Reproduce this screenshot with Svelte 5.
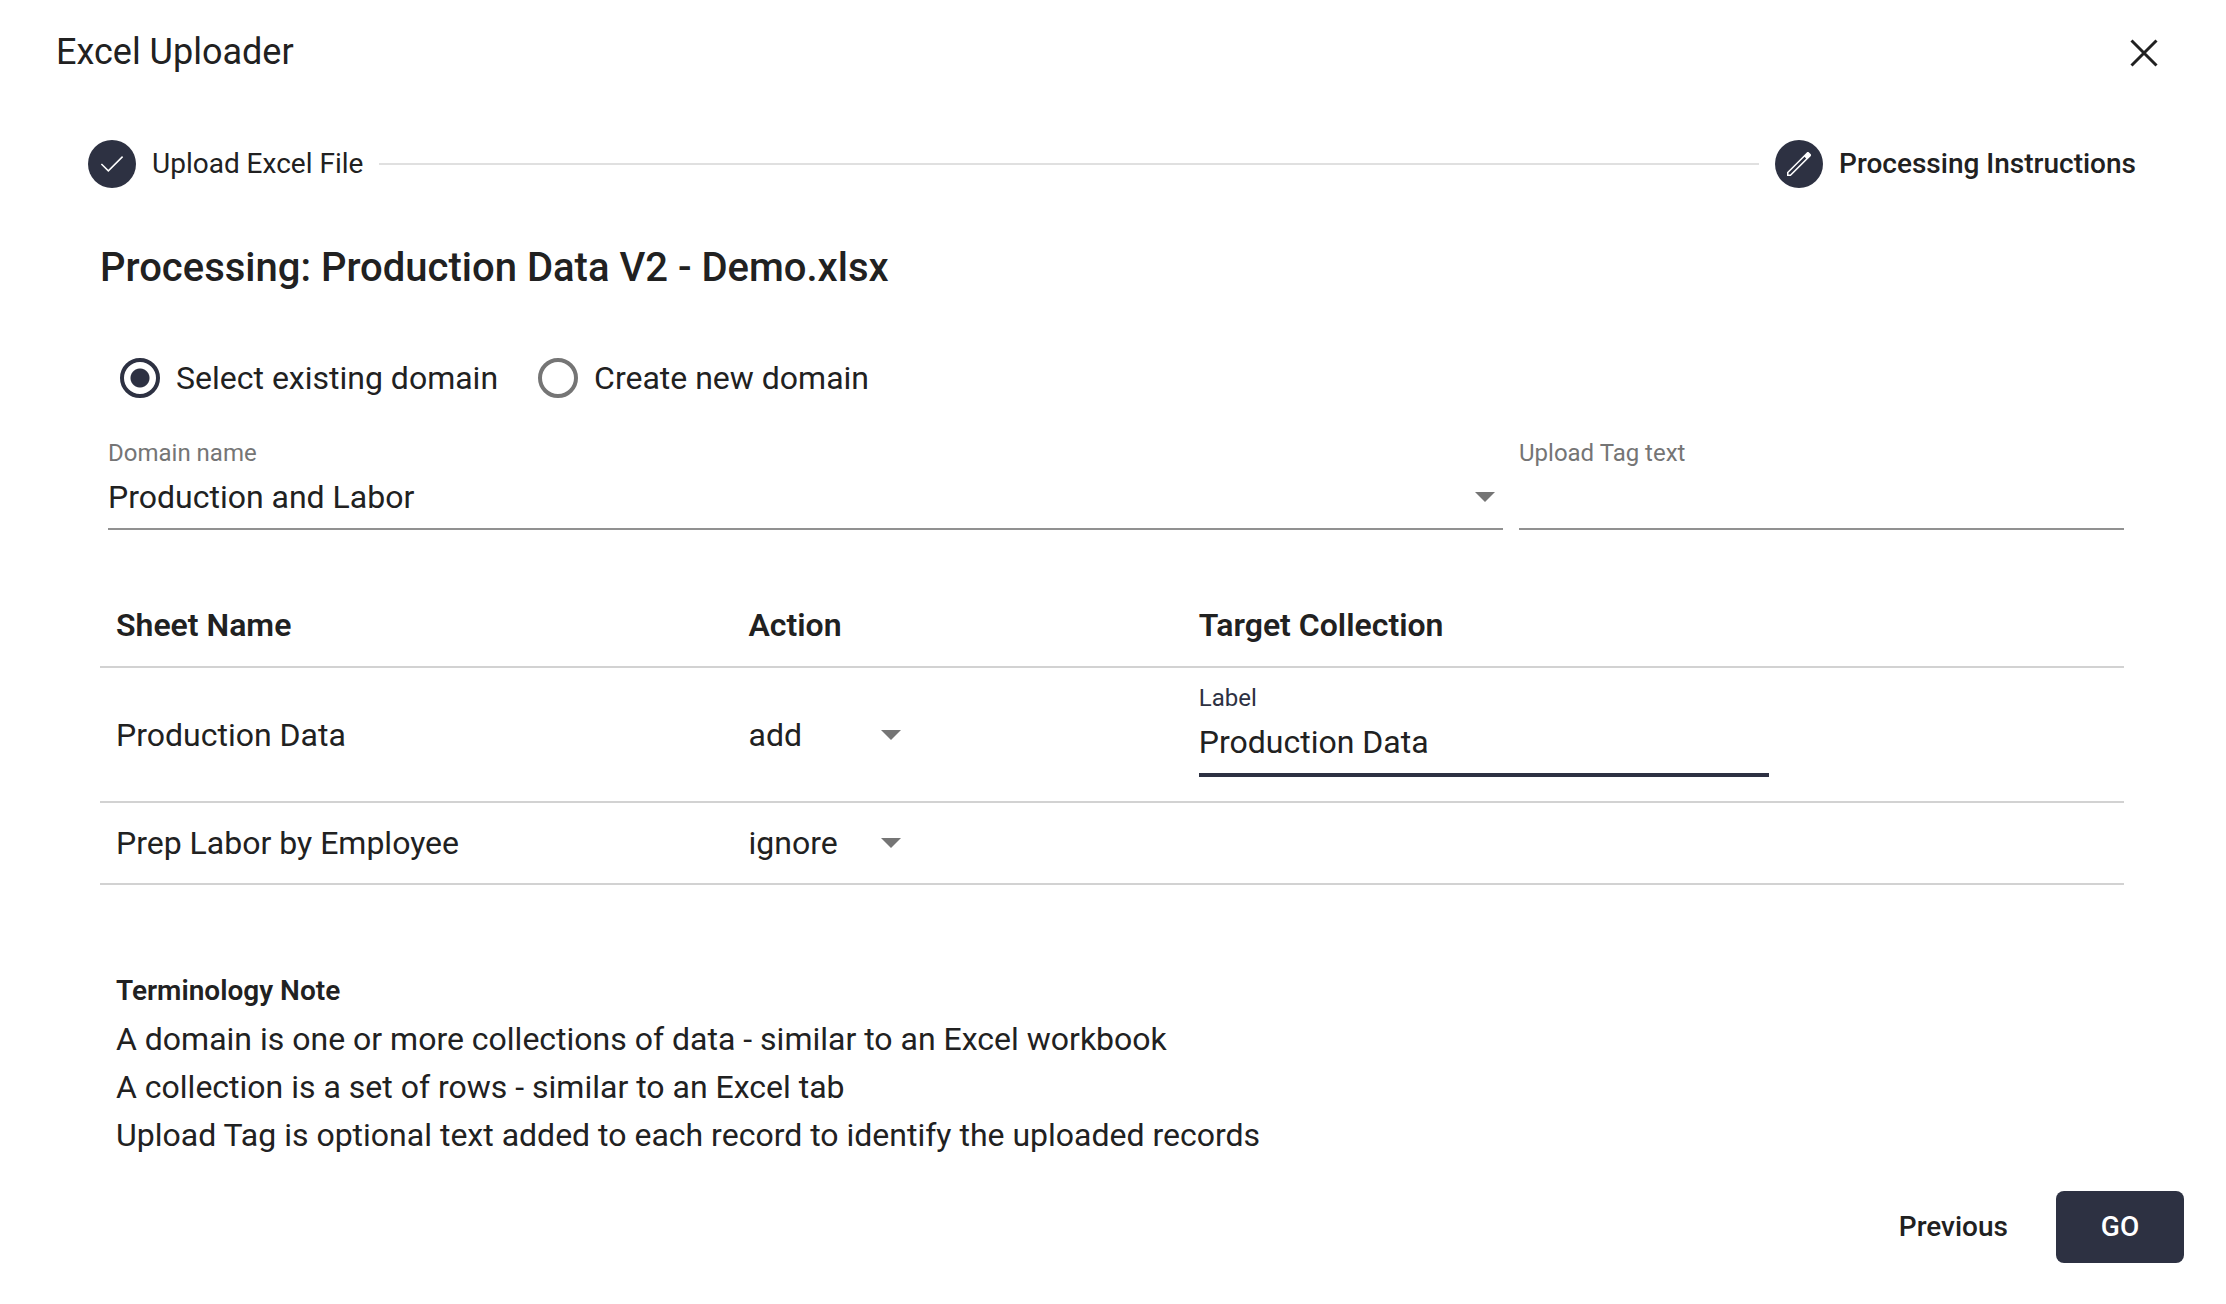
<script>
  let domainMode = $state('existing');
  let domain = $state('Production and Labor');
  let tag = $state('');
  let sheets = $state([
    { name: 'Production Data', action: 'add', target: 'Production Data' },
    { name: 'Prep Labor by Employee', action: 'ignore', target: '' }
  ]);
  const actions = ['add', 'replace', 'ignore'];
</script>

{#snippet arrow()}
  <svg class="arrow" viewBox="0 0 20 10" aria-hidden="true"><path d="M0 0h20L10 10z" /></svg>
{/snippet}

<main class="dialog">
  <header>
    <h1>Excel Uploader</h1>
    <button class="close" type="button" aria-label="Close">
      <svg viewBox="0 0 28 28" aria-hidden="true"><path d="M1.5 1.5l25 25M26.5 1.5l-25 25" /></svg>
    </button>
  </header>

  <ol class="stepper">
    <li class="step">
      <span class="badge">
        <svg viewBox="0 -960 960 960" aria-hidden="true">
          <path d="M382-267.690 183.230-466.460 211.770-495 382-324.770 748.230-691l28.540 28.540L382-267.690Z" />
        </svg>
      </span>
      <span>Upload Excel File</span>
    </li>
    <li class="line" role="presentation"></li>
    <li class="step current" aria-current="step">
      <span class="badge">
        <svg viewBox="0 -960 960 960" aria-hidden="true">
          <path fill-rule="evenodd" d="M160-160v-100.770L687.230-788.540q6.150-5.480 13.570-8.470 7.430-2.990 15.490-2.990t15.620 2.540q7.550 2.540 13.940 9.150l42.690 42.930q6.610 6.380 9.540 14 2.920 7.620 2.920 15.240 0 8.130-2.770 15.510-2.780 7.380-8.830 13.490L260.770-160ZM200-200h43.920l427.930-427.920-43.930-43.930L200-243.920Z" />
        </svg>
      </span>
      <span>Processing Instructions</span>
    </li>
  </ol>

  <section class="content">
    <h2>Processing: Production Data V2 - Demo.xlsx</h2>

    <div class="radios" role="radiogroup" aria-label="Domain source">
      <label><input type="radio" value="existing" bind:group={domainMode} />Select existing domain</label>
      <label><input type="radio" value="new" bind:group={domainMode} />Create new domain</label>
    </div>

    <div class="fields">
      <div class="field domain">
        <label for="domain">Domain name</label>
        <div class="control">
          <select id="domain" bind:value={domain}>
            <option>Production and Labor</option>
          </select>
          {@render arrow()}
        </div>
      </div>
      <div class="field tag">
        <label for="tag">Upload Tag text</label>
        <div class="control"><input id="tag" type="text" bind:value={tag} /></div>
      </div>
    </div>

    <table>
      <thead>
        <tr>
          <th class="col-name" scope="col">Sheet Name</th>
          <th class="col-action" scope="col">Action</th>
          <th scope="col">Target Collection</th>
        </tr>
      </thead>
      <tbody>
        {#each sheets as sheet, i}
          <tr>
            <td>{sheet.name}</td>
            <td>
              <div class="action">
                <select aria-label="Action for {sheet.name}" bind:value={sheet.action}>
                  {#each actions as a}<option>{a}</option>{/each}
                </select>
                {@render arrow()}
              </div>
            </td>
            <td class="target">
              {#if sheet.action !== 'ignore'}
                <div class="field active">
                  <label for="target-{i}">Label</label>
                  <div class="control"><input id="target-{i}" type="text" bind:value={sheet.target} /></div>
                </div>
              {/if}
            </td>
          </tr>
        {/each}
      </tbody>
    </table>

    <div class="note">
      <h3>Terminology Note</h3>
      <p>A domain is one or more collections of data - similar to an Excel workbook</p>
      <p>A collection is a set of rows - similar to an Excel tab</p>
      <p>Upload Tag is optional text added to each record to identify the uploaded records</p>
    </div>
  </section>

  <footer>
    <button class="previous" type="button">Previous</button>
    <button class="go" type="button">GO</button>
  </footer>
</main>

<style>
  :global(body) {
    background: #fff;
  }
  .dialog {
    --navy: #2d3142;
    --grey: #757575;
    color: #212121;
    font-family: Roboto, 'Liberation Sans', sans-serif;
    font-size: 32px;
    line-height: 48px;
  }
  .dialog * {
    box-sizing: border-box;
  }
  h1, h2, h3, p, ol {
    margin: 0;
    padding: 0;
  }
  button, input, select {
    font: inherit;
    color: inherit;
    margin: 0;
    padding: 0;
    border: 0;
    border-radius: 0;
    background: none;
    outline: 0;
  }
  svg {
    display: block;
    flex: none;
  }
  header {
    display: flex;
    align-items: flex-end;
    justify-content: space-between;
    padding: 27px 68px 27px 56px;
  }
  h1 {
    font-size: 36px;
    line-height: 50px;
    font-weight: 400;
  }
  .close {
    height: 48px;
  }
  .close svg {
    width: 28px;
    height: 28px;
    fill: none;
    stroke: #212121;
    stroke-width: 3;
  }
  .stepper {
    display: flex;
    align-items: center;
    gap: 16px;
    padding: 36px 90px 0 88px;
    list-style: none;
    font-size: 28px;
  }
  .step {
    display: flex;
    align-items: center;
    gap: 16px;
  }
  .current {
    font-weight: 500;
  }
  .badge {
    width: 48px;
    height: 48px;
    padding: 6px;
    border-radius: 50%;
    background: var(--navy);
  }
  .badge svg {
    width: 36px;
    height: 36px;
    fill: #fff;
  }
  .line {
    flex: 1;
    height: 2px;
    background: #e0e0e0;
  }
  .content {
    padding: 48px 102px 0 100px;
  }
  h2 {
    font-size: 40px;
    line-height: 64px;
    font-weight: 500;
  }
  .radios {
    display: flex;
    gap: 40px;
    padding: 54px 20px 0;
  }
  .radios label {
    display: flex;
    align-items: center;
    gap: 16px;
  }
  .radios input {
    appearance: none;
    width: 40px;
    height: 40px;
    border: 4px solid var(--grey);
    border-radius: 50%;
  }
  .radios input:checked {
    border-color: var(--navy);
    background: radial-gradient(circle, var(--navy) 9px, transparent 10px);
  }
  .fields {
    display: flex;
    gap: 16px;
    padding: 37px 0 0 8px;
  }
  .domain {
    flex: 1395;
  }
  .tag {
    flex: 605;
  }
  .field label {
    display: block;
    margin-bottom: 12px;
    font-size: 24px;
    line-height: 28px;
    color: var(--grey);
  }
  .control {
    display: flex;
    align-items: center;
    height: 51px;
    padding-bottom: 13px;
    border-bottom: 2px solid #919191;
  }
  .control .arrow {
    margin-right: 8px;
  }
  .control input, .control select {
    flex: 1;
    min-width: 0;
    height: 36px;
    line-height: 36px;
  }
  select {
    appearance: none;
  }
  .arrow {
    width: 20px;
    height: 10px;
    fill: var(--grey);
    pointer-events: none;
  }
  .active {
    max-width: 570px;
  }
  .active label {
    color: var(--navy);
  }
  .active .control {
    height: 53px;
    border-bottom: 4px solid var(--navy);
  }
  table {
    width: 100%;
    margin-top: 54px;
    border-spacing: 0;
    table-layout: fixed;
  }
  th, td {
    padding: 16px;
    border-bottom: 2px solid #d2d2d2;
    text-align: left;
    vertical-align: middle;
  }
  th {
    height: 84px;
    font-weight: 600;
  }
  td {
    height: 82px;
  }
  .target {
    padding: 16px 16px 24px;
  }
  .col-name {
    width: 31.25%;
  }
  .col-action {
    width: 22.25%;
  }
  .action {
    display: flex;
    align-items: center;
    width: 152px;
  }
  .action select {
    flex: 1;
    min-width: 0;
    height: 48px;
  }
  .note {
    padding: 82px 16px 0;
  }
  h3 {
    font-size: 28px;
    line-height: 48px;
    font-weight: 600;
  }
  footer {
    display: flex;
    justify-content: flex-end;
    gap: 16px;
    padding: 32px 42px 42px;
    font-size: 28px;
    font-weight: 500;
  }
  .previous {
    padding: 0 32px;
  }
  .go {
    width: 128px;
    height: 72px;
    border-radius: 8px;
    background: var(--navy);
    color: #fff;
  }
</style>
